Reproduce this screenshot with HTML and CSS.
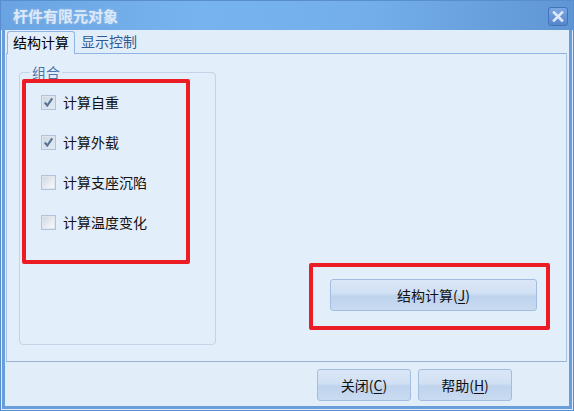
FILE: index.html
```html
<!DOCTYPE html>
<html lang="zh-CN">
<head>
    <meta charset="UTF-8">
    <title>杆件有限元对象</title>
    <link rel="stylesheet" href="styles.css">
</head>
<body>
    <div class="window">
        <div class="titlebar">
            <span class="title">杆件有限元对象</span>
            <button class="close-btn" aria-label="关闭">
                <svg width="12" height="11" viewBox="0 0 12 11">
                    <path d="M2 1.5 L10 9.5 M10 1.5 L2 9.5" stroke="#dfe9f6" stroke-width="2.6" stroke-linecap="square"/>
                </svg>
            </button>
        </div>

        <div class="client">
            <div class="tabs">
                <div class="tab active">结构计算</div>
                <div class="tab">显示控制</div>
            </div>

            <div class="tab-page">
                <div class="group">
                    <span class="group-title">组合</span>
                    <div class="check-list">
                        <label class="check-row"><span class="check checked"><svg width="11" height="11" viewBox="0 0 11 11"><path d="M1.8 5.5 L4.3 8.6 L9.2 1.4" fill="none" stroke="#53739b" stroke-width="2.1"/></svg></span>计算自重</label>
                        <label class="check-row"><span class="check checked"><svg width="11" height="11" viewBox="0 0 11 11"><path d="M1.8 5.5 L4.3 8.6 L9.2 1.4" fill="none" stroke="#53739b" stroke-width="2.1"/></svg></span>计算外载</label>
                        <label class="check-row"><span class="check"></span>计算支座沉陷</label>
                        <label class="check-row"><span class="check"></span>计算温度变化</label>
                    </div>
                </div>

                <div class="calc-area">
                    <button class="btn btn-wide">结构计算(<u>J</u>)</button>
                </div>
            </div>

            <div class="footer">
                <button class="btn">关闭(<u>C</u>)</button>
                <button class="btn">帮助(<u>H</u>)</button>
            </div>
        </div>

        <!-- red markers drawn over the dialog -->
        <div class="mark mark-checks"></div>
        <div class="mark mark-calc"></div>
    </div>
</body>
</html>
```

FILE: styles.css
```css
* {
    margin: 0;
    padding: 0;
    box-sizing: border-box;
    font-family: "Noto Sans CJK SC", "Liberation Sans", sans-serif;
}

body {
    background-color: #ffffff;
}

.window {
    position: relative;
    width: 574px;
    height: 411px;
    border: 1px solid #5a8dd0;
    padding: 0 4px 4px 4px;
    background-color: #6a9edb;
    box-shadow: inset 0 0 0 1px #e2ecf9;
    display: flex;
    flex-direction: column;
}

.titlebar {
    height: 29px;
    margin: 0 -4px;
    padding: 0 5px 0 12px;
    display: flex;
    align-items: center;
    justify-content: space-between;
    background: linear-gradient(to right, #6aa3e1 0%, #77b4ef 35%, #73aeea 65%, #5f95d3 100%);
}

.title {
    color: #dde9f8;
    font-size: 15px;
    font-weight: bold;
    line-height: 18px;
    text-shadow: 0 0 3px rgba(255, 255, 255, 0.35);
}

.close-btn {
    width: 20px;
    height: 19px;
    border: 1px solid #4573b8;
    border-radius: 3px;
    background: linear-gradient(#7aa8e4, #5585cc);
    display: flex;
    align-items: center;
    justify-content: center;
    margin-top: 1px;
}

.client {
    flex: 1;
    background-color: #e2edfa;
    display: flex;
    flex-direction: column;
}

.tabs {
    height: 23px;
    padding: 1px 0 0 2px;
    display: flex;
    align-items: flex-end;
}

.tab {
    height: 22px;
    padding: 0 6px;
    font-size: 14px;
    line-height: 21px;
    color: #2f5a96;
}

.tab.active {
    position: relative;
    z-index: 1;
    height: 23px;
    margin-bottom: -1px;
    padding: 0 5px;
    color: #000000;
    background-color: #e3eefb;
    border: 1px solid #8fb5e6;
    border-bottom: none;
    border-radius: 3px 3px 0 0;
}

.tab-page {
    height: 309px;
    margin: 0 2px 0 1px;
    background-color: #e3eefb;
    border: 1px solid #a9c3e3;
    border-top-color: #8fb5e6;
    border-bottom-color: #9bb3d3;
    padding: 18px 29px 0 12px;
    display: flex;
}

.group {
    width: 197px;
    height: 273px;
    border: 1px solid #c4d3e5;
    border-radius: 4px;
}

.group-title {
    display: block;
    width: fit-content;
    margin: -9px 0 0 10px;
    padding: 0 2px;
    background-color: #e3eefb;
    color: #4c72ad;
    font-size: 14px;
    line-height: 16px;
}

.check-list {
    padding: 12px 0 0 21px;
    display: flex;
    flex-direction: column;
    gap: 20px;
}

.check-row {
    height: 20px;
    display: flex;
    align-items: center;
    gap: 7px;
    font-size: 14px;
    color: #111111;
}

.check {
    width: 15px;
    height: 15px;
    border: 1px solid #b0c4de;
    background: linear-gradient(135deg, #c9d2de 0%, #e9edf2 55%, #f7f9fb 100%);
    box-shadow: inset 0 0 0 1px #dfe6ef;
    display: flex;
    align-items: center;
    justify-content: center;
}

.check.checked {
    background: linear-gradient(135deg, #cdd6e2 0%, #e6ebf1 100%);
}

.calc-area {
    flex: 1;
    display: flex;
    justify-content: flex-end;
    padding-top: 207px;
}

.btn {
    width: 94px;
    height: 32px;
    border: 1px solid #a3bde0;
    border-radius: 3px;
    background: linear-gradient(#dbe7f6 0%, #d0e0f3 45%, #bfd3ed 55%, #c9dbf1 100%);
    color: #111111;
    font-size: 14px;
}

.btn u {
    text-underline-offset: 2px;
}

.btn-wide {
    width: 207px;
}

.footer {
    flex: 1;
    padding: 7px 57px 0 0;
    display: flex;
    justify-content: flex-end;
    gap: 7px;
}

.mark {
    position: absolute;
    border: 4px solid #ec1c24;
    border-radius: 2px;
    pointer-events: none;
}

.mark-checks {
    left: 21px;
    top: 78px;
    width: 168px;
    height: 185px;
}

.mark-calc {
    left: 308px;
    top: 262px;
    width: 241px;
    height: 67px;
}
```
